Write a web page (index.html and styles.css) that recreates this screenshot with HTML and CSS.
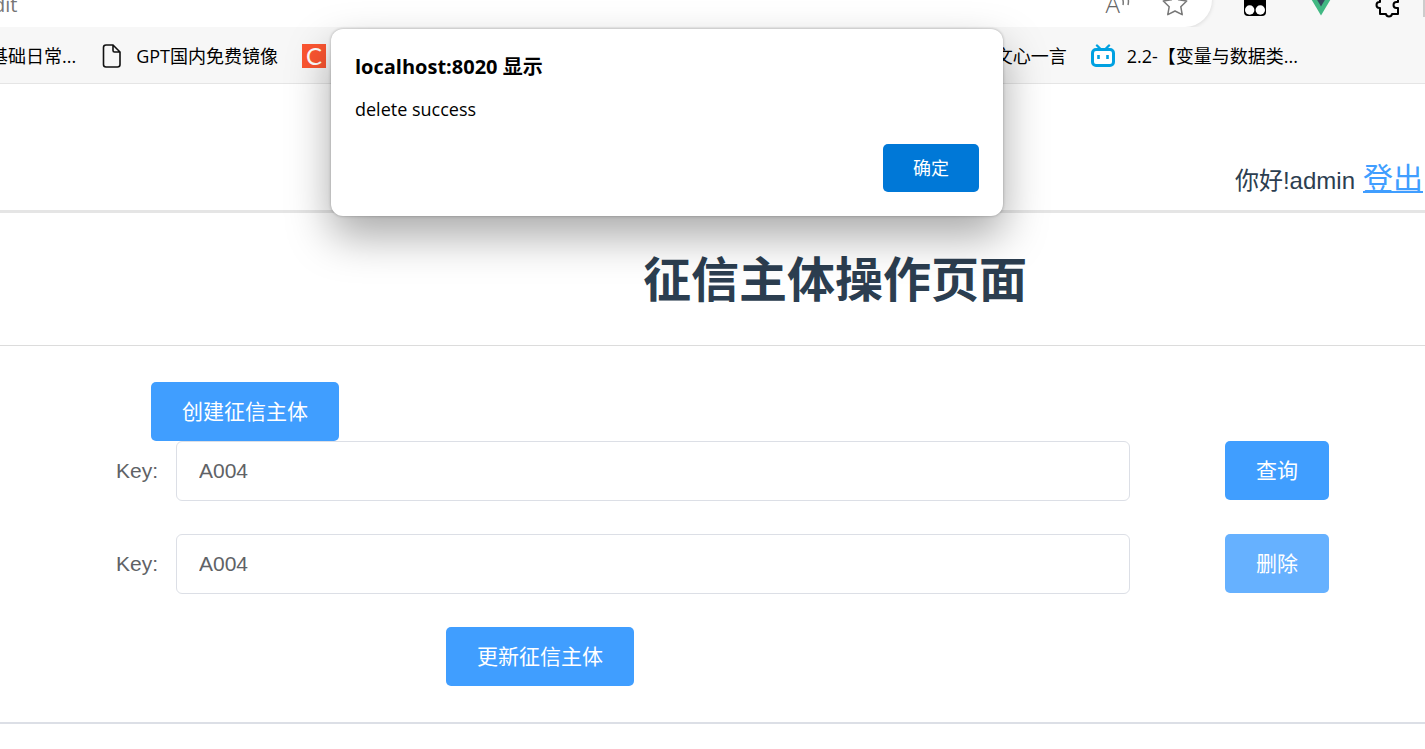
FILE: index.html
```html
<!DOCTYPE html>
<html lang="zh-CN">
<head>
<meta charset="utf-8">
<title>征信主体操作页面</title>
<link rel="stylesheet" href="styles.css">
</head>
<body>
<div class="toolbar">
  <div class="address">
    <span class="url">dit</span>
    <button class="tool read" aria-label="朗读此页"><span>A</span><svg width="10" height="24" viewBox="0 0 10 24"><path d="M1 4q3 4 2 9M6 2q3.500 5 2 11"/></svg></button>
    <button class="tool" aria-label="收藏"><svg width="26" height="26" viewBox="0 0 26 26"><path d="M13 1.500l3.600 7.300 8.100 1.200-5.900 5.700 1.400 8L13 20l-7.200 3.700 1.400-8L1.300 10l8.100-1.200z"/></svg></button>
  </div>
  <div class="extensions">
    <button class="tool" aria-label="Tampermonkey"><svg width="24" height="26" viewBox="0 0 24 26"><rect x="1" y="1" width="22" height="24" rx="4" fill="#000" stroke="none"/><circle cx="6.700" cy="19" r="4.700" fill="#fff" stroke="none"/><circle cx="17.300" cy="19" r="4.700" fill="#fff" stroke="none"/></svg></button>
    <button class="tool" aria-label="Vue"><svg width="28" height="25" viewBox="0 0 28 25"><path d="M0 0h28L14 23.500z" fill="#41b883" stroke="none"/><path d="M5.500 0h17L14 14.500z" fill="#35495e" stroke="none"/></svg></button>
    <button class="tool puzzle" aria-label="扩展"><svg width="26" height="27" viewBox="0 0 26 27"><path d="M5 6h5a3.500 3.500 0 1 1 6 0h7v5h-1.500a3 3 0 1 0 0 6H23v6h-6q-.5 2.500-3 2.500T11 23H5v-6H4.500a3 3 0 0 1 0-6H5z"/></svg></button>
    <span class="divider"></span>
  </div>
</div>
<nav class="bookmarks">
  <div class="group">
    <a href="#" class="cut">基础日常...</a>
    <a href="#"><svg class="ico" width="24" height="26" viewBox="0 0 24 26"><path d="M6 2h7l7 7v12.500a2.500 2.500 0 0 1-2.500 2.500H6a2.500 2.500 0 0 1-2.500-2.500v-17A2.500 2.500 0 0 1 6 2zM13 2v5.500A1.500 1.500 0 0 0 14.500 9H20" fill="none" stroke="#111" stroke-width="1.600"/></svg>GPT国内免费镜像</a>
    <a href="#"><span class="csdn">C</span></a>
  </div>
  <div class="group right">
    <a href="#">文心一言</a>
    <a href="#"><svg class="ico" width="24" height="24" viewBox="0 0 24 24"><path d="M6 1.500l3 3M18 1.500l-3 3" stroke="#00a1e1" stroke-width="2.400" stroke-linecap="round"/><rect x="1.500" y="5.500" width="21" height="16" rx="3.500" fill="#fff" stroke="#00a1e1" stroke-width="3"/><path d="M7.500 11v4M16.500 11v4" stroke="#00a1e1" stroke-width="2.600"/></svg>2.2-【变量与数据类...</a>
  </div>
</nav>
<header class="header"><span>你好!admin</span><a href="#">登出</a></header>
<h1 class="title">征信主体操作页面</h1>
<main class="form">
  <div class="create"><button class="btn">创建征信主体</button></div>
  <div class="row"><label for="query">Key:</label><input id="query" type="text" value="A004"><button class="btn">查询</button></div>
  <div class="row"><label for="remove">Key:</label><input id="remove" type="text" value="A004"><button class="btn active">删除</button></div>
  <div class="update"><button class="btn">更新征信主体</button></div>
</main>
<div class="dialog" role="alertdialog" aria-labelledby="dt" aria-describedby="dm">
  <h2 id="dt">localhost:8020 显示</h2>
  <p id="dm">delete success</p>
  <button class="ok">确定</button>
</div>
</body>
</html>
```
FILE: styles.css
```css
* { box-sizing: border-box; }
body { margin: 0; background: #fff; color: #2c3e50; font-family: "Liberation Sans", "Noto Sans CJK SC", sans-serif; overflow-x: hidden; }
button { border: 0; padding: 0; background: none; font-family: inherit; }

/* Browser toolbar */
.toolbar { display: flex; align-items: flex-end; height: 27px; background: #f7f7f7; overflow: hidden; }
.address { flex: 1; display: flex; align-items: center; height: 54px; padding-right: 24px; gap: 32px; background: #fff; border-radius: 0 27px 27px 0; box-shadow: 0 1px 4px rgba(0, 0, 0, .12); }
.url { flex: 1; margin-left: -7px; padding-top: 10px; color: #767676; font: 20px/24px "Open Sans", sans-serif; }
.tool { display: flex; align-items: center; padding-top: 8px; }
.tool svg { fill: none; stroke: #777; stroke-width: 1.500; stroke-linejoin: round; }
.read { color: #666; font: 300 24px/28px "Open Sans", sans-serif; }
.extensions { display: flex; align-items: center; height: 54px; padding-left: 31px; gap: 40px; }
.puzzle svg { stroke: #000; stroke-width: 2; }
.divider { width: 2px; height: 34px; margin-left: -18px; background: #ccc; }

/* Bookmarks */
.bookmarks { display: flex; justify-content: space-between; height: 57px; padding-top: 2px; border-bottom: 1px solid #e5e5e5; background: #f7f7f7; overflow: hidden; white-space: nowrap; }
.group { display: flex; align-items: center; gap: 24px; }
.group a { display: flex; align-items: center; gap: 12px; color: #000; font: 18px/24px "Open Sans", "Noto Sans CJK SC", sans-serif; text-decoration: none; }
.cut { margin-left: -10px; }
.right { padding-right: 127px; }
.csdn { width: 24px; height: 24px; background: #fc5531; color: #fff; font: 24px/24px Lato, sans-serif; text-align: center; }

/* Page */
.header { display: flex; justify-content: flex-end; align-items: baseline; gap: 8px; height: 129px; padding: 70px 2px 0 0; border-bottom: 3px solid #e5e5e5; font-size: 24px; }
.header a { color: #409eff; font-size: 30px; text-decoration-thickness: 2px; text-underline-offset: 2px; }
.title { margin: 0; padding: 34px 0 30px 245px; border-bottom: 1px solid #dcdcdc; font-size: 48px; line-height: 68px; text-align: center; }
.form { padding: 36px 96px 36px 116px; border-bottom: 2px solid #dcdfe6; color: #606266; font-size: 21px; }
.btn { height: 59px; padding: 0 31px; border-radius: 5px; background: #409eff; color: #fff; font-size: 21px; line-height: 24px; white-space: nowrap; }
.active { background: #66b1ff; }
.create { display: flex; padding-left: 35px; }
.row { display: flex; margin-bottom: 33px; }
.row label { width: 60px; line-height: 60px; }
.row input { flex: 1; min-width: 0; height: 60px; margin-right: 95px; padding: 0 22px; border: 1px solid #dcdfe6; border-radius: 6px; background: #fff; color: #606266; font: inherit; }
.update { display: flex; padding-left: 330px; }

/* Alert */
.dialog { position: absolute; top: 29px; left: 331px; width: 672px; padding: 24px; display: flex; flex-direction: column; border-radius: 12px; background: #fff; color: #000; font-family: "Open Sans", "Noto Sans CJK SC", sans-serif; box-shadow: 0 0 3px rgba(0, 0, 0, .3), 0 20px 44px rgba(0, 0, 0, .34); }
.dialog h2 { margin: 0 0 14px; font-size: 20px; line-height: 28px; }
.dialog p { margin: 0 0 21px; font-size: 18px; line-height: 28px; }
.ok { align-self: flex-end; width: 96px; height: 48px; padding-bottom: 3px; border-radius: 5px; background: #0078d7; color: #fff; font-size: 18px; }
```
